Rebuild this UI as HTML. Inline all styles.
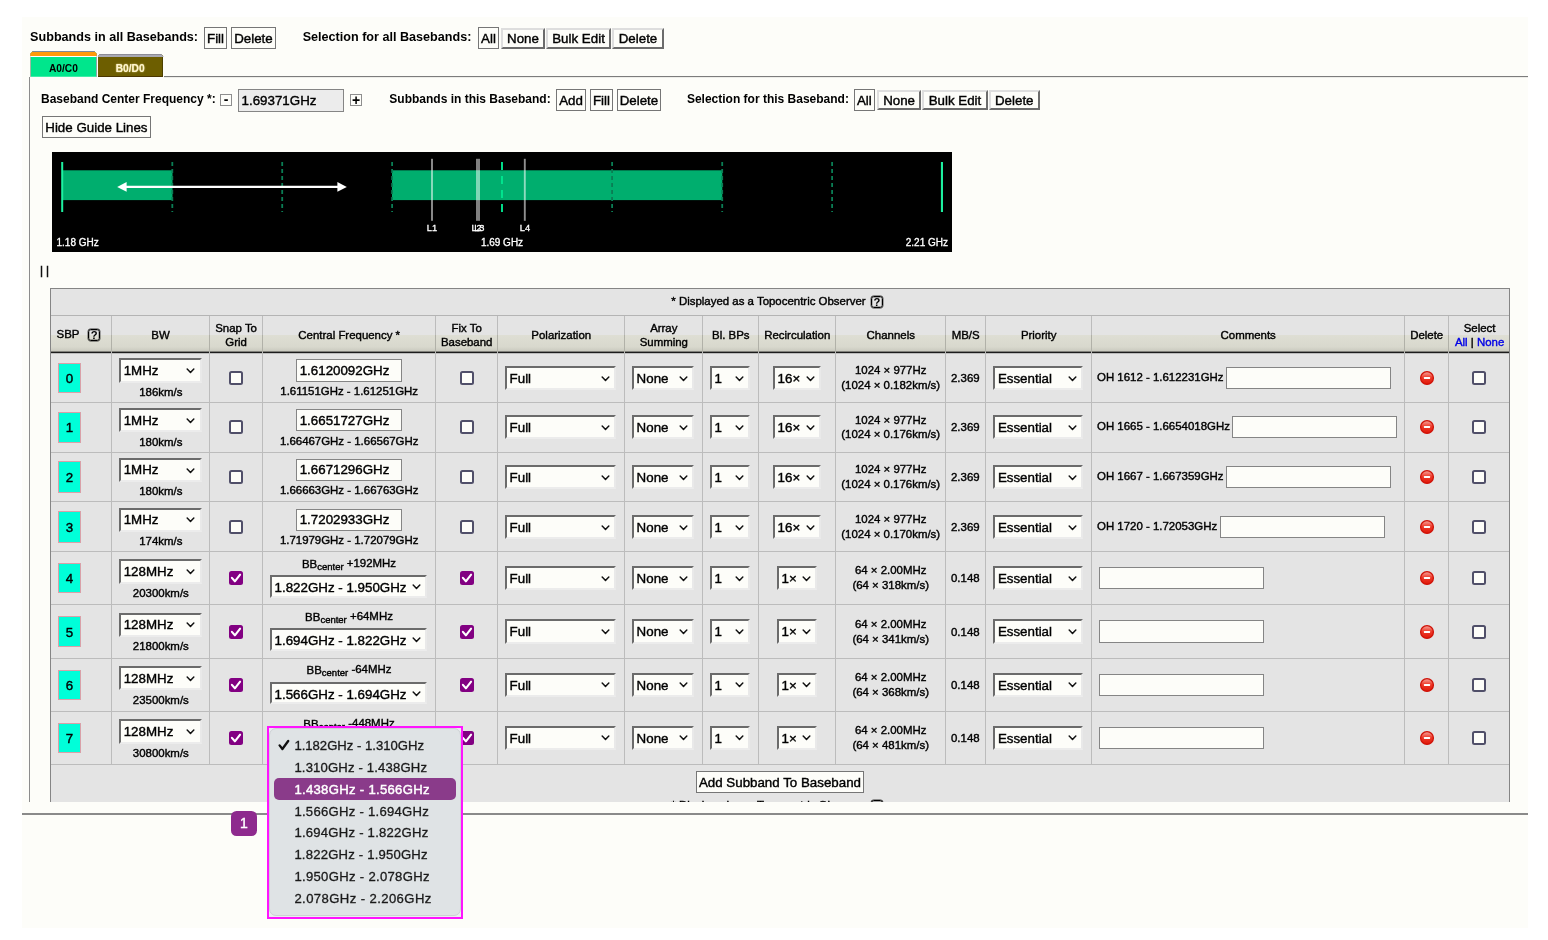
<!DOCTYPE html>
<html lang="en"><head><meta charset="utf-8"><title>Subband configuration</title><style>
html,body{margin:0;padding:0;background:#fff}
body{width:1548px;height:940px;position:relative;overflow:hidden;font-family:"Liberation Sans",Arial,Helvetica,sans-serif;color:#000}
body div,.abs{position:absolute;box-sizing:content-box}
.t{white-space:nowrap;-webkit-text-stroke:0.4px currentColor}
.t sub{font-size:9.5px;vertical-align:baseline;position:relative;top:2px;line-height:0}
.t .up{position:relative;top:-1px}
#all{left:0;top:0;width:1548px;height:940px;will-change:transform}
#clip{left:0;top:0;width:1548px;height:801.8px;overflow:hidden}
.sel{box-sizing:border-box;background:#fdfdf9;border:2px solid;border-color:#6b6b6b #e9e9e9 #ececec #6b6b6b;font-size:13.33px;white-space:nowrap;overflow:hidden}
.sel .chev{position:absolute;right:4.3px;top:50%;margin-top:-2.4px}
.btn{box-sizing:border-box;background:#fdfdf9;font-size:13.33px;text-align:center;white-space:nowrap}
.btn.flat{border:1px solid #767676}
.btn.outset{border:2px solid;border-color:#dedede #6c6c6c #6c6c6c #dedede}
.cb{width:14px;height:14px;box-sizing:border-box;border:2px solid #504f69;border-radius:2.5px;background:#fdfdf9}
.cb.on{border:0;background:#820082}
.cb.on svg{position:absolute;left:0;top:0}
.hlp{width:12px;height:12px;box-sizing:border-box;border:1px solid #000;border-radius:2.6px;box-shadow:0 0 0 0.4px rgba(0,0,0,.75),inset 0 0 0 0.4px rgba(0,0,0,.6)}
.mini{width:11.6px;height:11.6px;box-sizing:border-box;border:1px solid #8e8e8e;background:#fdfdf9}
</style></head><body>
<div id="all">
<div style="left:22.00px;top:17.00px;width:1506.00px;height:910.60px;background:#fdfdf9"></div>
<div class="t" style="left:30.10px;top:30px;font-size:12.6px;line-height:14px;font-weight:bold;-webkit-text-stroke:0;">Subbands in all Basebands:</div>
<div class="btn flat" style="left:204.10px;top:27.00px;width:22.80px;height:21.70px"></div>
<div class="t" style="left:-84.50px;width:600px;text-align:center;top:31px;font-size:13.33px;line-height:15px;">Fill</div>
<div class="btn flat" style="left:231.00px;top:27.00px;width:44.90px;height:21.70px"></div>
<div class="t" style="left:-46.55px;width:600px;text-align:center;top:31px;font-size:13.33px;line-height:15px;">Delete</div>
<div class="t" style="left:302.70px;top:30px;font-size:12.6px;line-height:14px;font-weight:bold;-webkit-text-stroke:0;">Selection for all Basebands:</div>
<div class="btn flat" style="left:478.00px;top:27.00px;width:20.90px;height:21.70px"></div>
<div class="t" style="left:188.45px;width:600px;text-align:center;top:31px;font-size:13.33px;line-height:15px;">All</div>
<div class="btn outset" style="left:501.40px;top:27.50px;width:43.20px;height:21.00px"></div>
<div class="t" style="left:223.00px;width:600px;text-align:center;top:31px;font-size:13.33px;line-height:15px;">None</div>
<div class="btn outset" style="left:545.60px;top:27.50px;width:65.90px;height:21.00px"></div>
<div class="t" style="left:278.55px;width:600px;text-align:center;top:31px;font-size:13.33px;line-height:15px;">Bulk Edit</div>
<div class="btn outset" style="left:612.20px;top:27.50px;width:51.60px;height:21.00px"></div>
<div class="t" style="left:338.00px;width:600px;text-align:center;top:31px;font-size:13.33px;line-height:15px;">Delete</div>
<div class="abs" style="left:30.3px;top:51px;width:66.4px;height:25.7px;background:#00e68c;clip-path:polygon(2.6px 0,63.8px 0,66.4px 2.6px,66.4px 100%,0 100%,0 2.6px);border-right:1px solid #a58aa5;border-left:1px solid #c9a0a0;box-sizing:border-box"><div style="position:absolute;left:-1px;right:-1px;top:0;height:5px;background:#ff9a0a;border-top:1px solid #7d8a99;box-sizing:border-box"></div><div style="position:absolute;left:-1px;right:-1px;top:5px;height:1.2px;background:#fff"></div></div>
<div class="t" style="left:-236.60px;width:600px;text-align:center;top:63px;font-size:10.2px;line-height:11px;font-weight:bold;-webkit-text-stroke:0;">A0/C0</div>
<div class="abs" style="left:97.7px;top:54px;width:65.6px;height:23px;background:#6d5e00;clip-path:polygon(2.2px 0,63.4px 0,65.6px 2.2px,65.6px 100%,0 100%,0 2.2px);border-right:1.5px solid #4d4100;border-bottom:1.5px solid #4a3600;box-sizing:border-box"><div style="position:absolute;left:0;right:-2px;top:0;height:2.8px;background:#a9a9b3;border-top:1px solid #8c8c96;box-sizing:border-box"></div></div>
<div class="t" style="left:-169.80px;width:600px;text-align:center;top:63px;font-size:10.2px;line-height:11px;font-weight:bold;-webkit-text-stroke:0;color:#fff6cf;text-shadow:0 0 1.5px #fff2b0;">B0/D0</div>
<div style="left:163.80px;top:76.00px;width:1364.20px;height:1.00px;background:#7c7c7c"></div>
<div style="left:163.80px;top:77.00px;width:1364.20px;height:1.00px;background:rgba(124,124,124,.12)"></div>
<div style="left:29.20px;top:76.80px;width:1.10px;height:725.00px;background:#8c8c8c"></div>
<div class="t" style="left:41.00px;top:92px;font-size:12px;line-height:14px;font-weight:bold;-webkit-text-stroke:0;">Baseband Center Frequency *:</div>
<div class="mini" style="left:220.2px;top:94.1px"></div>
<div class="t" style="left:-74.00px;width:600px;text-align:center;top:91px;font-size:14px;line-height:16px;font-weight:bold;-webkit-text-stroke:0;">-</div>
<div style="left:238.10px;top:89.00px;width:105.80px;height:22.70px;background:#ececec;border:1px solid #858585;box-sizing:border-box"></div>
<div class="t" style="left:241.60px;top:93px;font-size:13.33px;line-height:15px;">1.69371GHz</div>
<div class="mini" style="left:350.2px;top:94.1px"></div>
<div class="t" style="left:56.00px;width:600px;text-align:center;top:92px;font-size:14px;line-height:16px;font-weight:bold;-webkit-text-stroke:0;">+</div>
<div class="t" style="left:389.30px;top:92px;font-size:12px;line-height:14px;font-weight:bold;-webkit-text-stroke:0;">Subbands in this Baseband:</div>
<div class="btn flat" style="left:556.00px;top:89.30px;width:30.00px;height:22.20px"></div>
<div class="t" style="left:271.00px;width:600px;text-align:center;top:93px;font-size:13.33px;line-height:15px;">Add</div>
<div class="btn flat" style="left:590.00px;top:89.30px;width:22.80px;height:22.20px"></div>
<div class="t" style="left:301.40px;width:600px;text-align:center;top:93px;font-size:13.33px;line-height:15px;">Fill</div>
<div class="btn flat" style="left:617.00px;top:89.30px;width:43.90px;height:22.20px"></div>
<div class="t" style="left:338.95px;width:600px;text-align:center;top:93px;font-size:13.33px;line-height:15px;">Delete</div>
<div class="t" style="left:686.90px;top:92px;font-size:12px;line-height:14px;font-weight:bold;-webkit-text-stroke:0;">Selection for this Baseband:</div>
<div class="btn flat" style="left:854.00px;top:89.30px;width:20.70px;height:22.20px"></div>
<div class="t" style="left:564.35px;width:600px;text-align:center;top:93px;font-size:13.33px;line-height:15px;">All</div>
<div class="btn outset" style="left:877.20px;top:89.60px;width:43.80px;height:20.70px"></div>
<div class="t" style="left:599.10px;width:600px;text-align:center;top:93px;font-size:13.33px;line-height:15px;">None</div>
<div class="btn outset" style="left:922.20px;top:89.60px;width:65.50px;height:20.70px"></div>
<div class="t" style="left:654.95px;width:600px;text-align:center;top:93px;font-size:13.33px;line-height:15px;">Bulk Edit</div>
<div class="btn outset" style="left:988.60px;top:89.60px;width:51.30px;height:20.70px"></div>
<div class="t" style="left:714.25px;width:600px;text-align:center;top:93px;font-size:13.33px;line-height:15px;">Delete</div>
<div class="btn flat" style="left:42.00px;top:116.10px;width:108.80px;height:21.60px"></div>
<div class="t" style="left:-203.60px;width:600px;text-align:center;top:120px;font-size:13.33px;line-height:15px;">Hide Guide Lines</div>
<svg class="abs" style="left:52px;top:152px" width="900" height="100" viewBox="0 0 900 100"><rect width="900" height="100" fill="#000"/><rect x="10.6" y="18.3" width="109.9" height="29.8" fill="#00ae6e"/><rect x="340" y="18.3" width="330.3" height="29.8" fill="#00ae6e"/><line x1="120.3" y1="10" x2="120.3" y2="60" stroke="#0a7d54" stroke-width="1.8" stroke-dasharray="4 3"/><line x1="230.2" y1="10" x2="230.2" y2="60" stroke="#0a7d54" stroke-width="1.8" stroke-dasharray="4 3"/><line x1="340.1" y1="10" x2="340.1" y2="60" stroke="#0a7d54" stroke-width="1.8" stroke-dasharray="4 3"/><line x1="560.1" y1="10" x2="560.1" y2="60" stroke="#0a7d54" stroke-width="1.8" stroke-dasharray="4 3"/><line x1="670.2" y1="10" x2="670.2" y2="60" stroke="#0a7d54" stroke-width="1.8" stroke-dasharray="4 3"/><line x1="780.1" y1="10" x2="780.1" y2="60" stroke="#0a7d54" stroke-width="1.8" stroke-dasharray="4 3"/><line x1="450" y1="10" x2="450" y2="60" stroke="#00e58f" stroke-width="1.9" stroke-dasharray="8 6"/><rect x="9.2" y="10" width="2" height="50" fill="#1df0a0"/><rect x="888.9" y="10" width="2.1" height="50" fill="#1df0a0"/><line x1="72" y1="34.9" x2="288" y2="34.9" stroke="#fff" stroke-width="2.2"/><polygon points="65.2,34.9 74.6,30 74.6,39.8" fill="#fff"/><polygon points="294.8,34.9 285.4,30 285.4,39.8" fill="#fff"/><rect x="379.05" y="6.8" width="1.9" height="62" fill="#fff" fill-opacity="0.56"/><rect x="424.0" y="6.8" width="4.0" height="62" fill="#fff" fill-opacity="0.5"/><rect x="471.85" y="6.8" width="1.9" height="62" fill="#fff" fill-opacity="0.56"/><text x="380" y="79" font-size="9.3" text-anchor="middle" font-family="Liberation Sans, sans-serif" fill="#fff" stroke="#fff" stroke-width="0.3">L1</text><text x="424.6" y="79" font-size="9.3" text-anchor="middle" font-family="Liberation Sans, sans-serif" fill="#fff" stroke="#fff" stroke-width="0.3">L2</text><text x="427.3" y="79" font-size="9.3" text-anchor="middle" font-family="Liberation Sans, sans-serif" fill="#fff" stroke="#fff" stroke-width="0.3">L3</text><text x="473" y="79" font-size="9.3" text-anchor="middle" font-family="Liberation Sans, sans-serif" fill="#fff" stroke="#fff" stroke-width="0.3">L4</text><text x="4.5" y="94" font-size="10" font-family="Liberation Sans, sans-serif" fill="#fff" stroke="#fff" stroke-width="0.3">1.18 GHz</text><text x="450" y="94" font-size="10" text-anchor="middle" font-family="Liberation Sans, sans-serif" fill="#fff" stroke="#fff" stroke-width="0.3">1.69 GHz</text><text x="896" y="94" font-size="10" text-anchor="end" font-family="Liberation Sans, sans-serif" fill="#fff" stroke="#fff" stroke-width="0.3">2.21 GHz</text></svg>
<div style="left:41.00px;top:266.20px;width:1.00px;height:11.00px;background:#111;box-shadow:0 0 0 0.25px #111"></div>
<div style="left:47.00px;top:266.20px;width:1.00px;height:11.00px;background:#111;box-shadow:0 0 0 0.25px #111"></div>
<div id="clip">
<div style="left:50.20px;top:288.10px;width:1459.80px;height:551.90px;background:#e4e4e4;border:1px solid #858585;box-sizing:border-box"></div>
<div class="t" style="left:671.30px;top:295px;font-size:11.44px;line-height:12px;">* Displayed as a Topocentric Observer</div>
<div class="hlp" style="left:870.90px;top:295.80px"></div>
<div class="t" style="left:576.95px;width:600px;text-align:center;top:296px;font-size:11.2px;line-height:12px;font-weight:bold;-webkit-text-stroke:0;">?</div>
<div style="left:51.20px;top:314.70px;width:1457.80px;height:1.00px;background:#b4b4b4"></div>
<div style="left:51.20px;top:335.10px;width:1457.80px;height:16.90px;background:linear-gradient(#deded4,#d8d8cd 70%,#c6c6bc)"></div>
<div style="left:51.20px;top:351.00px;width:1457.80px;height:1.00px;background:rgba(28,28,28,.42)"></div>
<div style="left:51.20px;top:352.00px;width:1457.80px;height:1.00px;background:#1c1c1c"></div>
<div style="left:51.20px;top:353.00px;width:1457.80px;height:1.00px;background:rgba(28,28,28,.2)"></div>
<div class="t" style="left:56.50px;top:328px;font-size:11.44px;line-height:12px;">SBP</div>
<div class="hlp" style="left:88.10px;top:329.10px"></div>
<div class="t" style="left:-205.85px;width:600px;text-align:center;top:329px;font-size:11.2px;line-height:12px;font-weight:bold;-webkit-text-stroke:0;">?</div>
<div class="t" style="left:-139.50px;width:600px;text-align:center;top:329px;font-size:11.44px;line-height:12px;">BW</div>
<div class="t" style="left:-63.90px;width:600px;text-align:center;top:322px;font-size:11.44px;line-height:12px;">Snap To</div>
<div class="t" style="left:-63.90px;width:600px;text-align:center;top:336px;font-size:11.44px;line-height:12px;">Grid</div>
<div class="t" style="left:49.20px;width:600px;text-align:center;top:329px;font-size:11.44px;line-height:12px;">Central Frequency *</div>
<div class="t" style="left:166.70px;width:600px;text-align:center;top:322px;font-size:11.44px;line-height:12px;">Fix To</div>
<div class="t" style="left:166.70px;width:600px;text-align:center;top:336px;font-size:11.44px;line-height:12px;">Baseband</div>
<div class="t" style="left:261.25px;width:600px;text-align:center;top:329px;font-size:11.44px;line-height:12px;">Polarization</div>
<div class="t" style="left:363.80px;width:600px;text-align:center;top:322px;font-size:11.44px;line-height:12px;">Array</div>
<div class="t" style="left:363.80px;width:600px;text-align:center;top:336px;font-size:11.44px;line-height:12px;">Summing</div>
<div class="t" style="left:430.80px;width:600px;text-align:center;top:329px;font-size:11.44px;line-height:12px;">Bl. BPs</div>
<div class="t" style="left:497.30px;width:600px;text-align:center;top:329px;font-size:11.44px;line-height:12px;">Recirculation</div>
<div class="t" style="left:590.75px;width:600px;text-align:center;top:329px;font-size:11.44px;line-height:12px;">Channels</div>
<div class="t" style="left:665.70px;width:600px;text-align:center;top:329px;font-size:11.44px;line-height:12px;">MB/S</div>
<div class="t" style="left:738.70px;width:600px;text-align:center;top:329px;font-size:11.44px;line-height:12px;">Priority</div>
<div class="t" style="left:948.20px;width:600px;text-align:center;top:329px;font-size:11.44px;line-height:12px;">Comments</div>
<div class="t" style="left:1126.70px;width:600px;text-align:center;top:329px;font-size:11.44px;line-height:12px;">Delete</div>
<div class="t" style="left:1179.60px;width:600px;text-align:center;top:322px;font-size:11.44px;line-height:12px;">Select</div>
<div class="t" style="left:1179.60px;width:600px;text-align:center;top:336px;font-size:11.44px;line-height:12px;"><span style="color:#0000e6">All</span> | <span style="color:#0000e6">None</span></div>
<div style="left:111.00px;top:316.00px;width:1.00px;height:448.60px;background:#bcbcbc"></div>
<div style="left:111.00px;top:335.10px;width:1.00px;height:16.60px;background:#b1b1a8"></div>
<div style="left:209.00px;top:316.00px;width:1.00px;height:448.60px;background:#bcbcbc"></div>
<div style="left:209.00px;top:335.10px;width:1.00px;height:16.60px;background:#b1b1a8"></div>
<div style="left:262.20px;top:316.00px;width:1.00px;height:448.60px;background:#bcbcbc"></div>
<div style="left:262.20px;top:335.10px;width:1.00px;height:16.60px;background:#b1b1a8"></div>
<div style="left:435.20px;top:316.00px;width:1.00px;height:448.60px;background:#bcbcbc"></div>
<div style="left:435.20px;top:335.10px;width:1.00px;height:16.60px;background:#b1b1a8"></div>
<div style="left:497.20px;top:316.00px;width:1.00px;height:448.60px;background:#bcbcbc"></div>
<div style="left:497.20px;top:335.10px;width:1.00px;height:16.60px;background:#b1b1a8"></div>
<div style="left:624.30px;top:316.00px;width:1.00px;height:448.60px;background:#bcbcbc"></div>
<div style="left:624.30px;top:335.10px;width:1.00px;height:16.60px;background:#b1b1a8"></div>
<div style="left:702.30px;top:316.00px;width:1.00px;height:448.60px;background:#bcbcbc"></div>
<div style="left:702.30px;top:335.10px;width:1.00px;height:16.60px;background:#b1b1a8"></div>
<div style="left:758.30px;top:316.00px;width:1.00px;height:448.60px;background:#bcbcbc"></div>
<div style="left:758.30px;top:335.10px;width:1.00px;height:16.60px;background:#b1b1a8"></div>
<div style="left:835.30px;top:316.00px;width:1.00px;height:448.60px;background:#bcbcbc"></div>
<div style="left:835.30px;top:335.10px;width:1.00px;height:16.60px;background:#b1b1a8"></div>
<div style="left:945.20px;top:316.00px;width:1.00px;height:448.60px;background:#bcbcbc"></div>
<div style="left:945.20px;top:335.10px;width:1.00px;height:16.60px;background:#b1b1a8"></div>
<div style="left:985.20px;top:316.00px;width:1.00px;height:448.60px;background:#bcbcbc"></div>
<div style="left:985.20px;top:335.10px;width:1.00px;height:16.60px;background:#b1b1a8"></div>
<div style="left:1091.20px;top:316.00px;width:1.00px;height:448.60px;background:#bcbcbc"></div>
<div style="left:1091.20px;top:335.10px;width:1.00px;height:16.60px;background:#b1b1a8"></div>
<div style="left:1404.20px;top:316.00px;width:1.00px;height:448.60px;background:#bcbcbc"></div>
<div style="left:1404.20px;top:335.10px;width:1.00px;height:16.60px;background:#b1b1a8"></div>
<div style="left:1448.20px;top:316.00px;width:1.00px;height:448.60px;background:#bcbcbc"></div>
<div style="left:1448.20px;top:335.10px;width:1.00px;height:16.60px;background:#b1b1a8"></div>
<div style="left:51.20px;top:401.80px;width:1457.80px;height:1.00px;background:#bcbcbc"></div>
<div style="left:51.20px;top:451.60px;width:1457.80px;height:1.00px;background:#bcbcbc"></div>
<div style="left:51.20px;top:501.40px;width:1457.80px;height:1.00px;background:#bcbcbc"></div>
<div style="left:51.20px;top:551.00px;width:1457.80px;height:1.00px;background:#bcbcbc"></div>
<div style="left:51.20px;top:604.10px;width:1457.80px;height:1.00px;background:#bcbcbc"></div>
<div style="left:51.20px;top:657.50px;width:1457.80px;height:1.00px;background:#bcbcbc"></div>
<div style="left:51.20px;top:710.80px;width:1457.80px;height:1.00px;background:#bcbcbc"></div>
<div style="left:51.20px;top:764.00px;width:1457.80px;height:1.00px;background:#bcbcbc"></div>
<div style="left:58.10px;top:362.60px;width:22.70px;height:30.60px;background:#00ffd9;border:1px solid #d9a0a8;box-sizing:border-box"></div>
<div class="t" style="left:-230.50px;width:600px;text-align:center;top:371px;font-size:13.33px;line-height:15px;-webkit-text-stroke-width:0.4px;">0</div>
<div class="sel" style="left:119.00px;top:358.20px;width:82.60px;height:24.60px"><svg class="chev" viewBox="0 0 9 6" width="9" height="6"><path d="M1.2 1 L4.5 4.4 L7.8 1" fill="none" stroke="#111" stroke-width="1.5" stroke-linecap="round" stroke-linejoin="round"/></svg></div>
<div class="t" style="left:123.70px;top:363px;font-size:13.33px;line-height:15px;">1MHz</div>
<div class="t" style="left:-139.20px;width:600px;text-align:center;top:386px;font-size:11.44px;line-height:12px;">186km/s</div>
<div class="cb" style="left:229.00px;top:370.90px"></div>
<div style="left:295.90px;top:359.20px;width:105.90px;height:22.50px;background:#fdfdf9;border:1px solid #858585;box-sizing:border-box"></div>
<div class="t" style="left:299.70px;top:363px;font-size:13.33px;line-height:15px;">1.6120092GHz</div>
<div class="t" style="left:49.20px;width:600px;text-align:center;top:385px;font-size:11.44px;line-height:12px;">1.61151GHz - 1.61251GHz</div>
<div class="cb" style="left:460.10px;top:370.90px"></div>
<div class="sel" style="left:504.90px;top:365.60px;width:111.40px;height:24.60px"><svg class="chev" viewBox="0 0 9 6" width="9" height="6"><path d="M1.2 1 L4.5 4.4 L7.8 1" fill="none" stroke="#111" stroke-width="1.5" stroke-linecap="round" stroke-linejoin="round"/></svg></div>
<div class="t" style="left:509.60px;top:371px;font-size:13.33px;line-height:15px;">Full</div>
<div class="sel" style="left:631.90px;top:365.60px;width:62.40px;height:24.60px"><svg class="chev" viewBox="0 0 9 6" width="9" height="6"><path d="M1.2 1 L4.5 4.4 L7.8 1" fill="none" stroke="#111" stroke-width="1.5" stroke-linecap="round" stroke-linejoin="round"/></svg></div>
<div class="t" style="left:636.60px;top:371px;font-size:13.33px;line-height:15px;">None</div>
<div class="sel" style="left:709.90px;top:365.60px;width:40.20px;height:24.60px"><svg class="chev" viewBox="0 0 9 6" width="9" height="6"><path d="M1.2 1 L4.5 4.4 L7.8 1" fill="none" stroke="#111" stroke-width="1.5" stroke-linecap="round" stroke-linejoin="round"/></svg></div>
<div class="t" style="left:714.60px;top:371px;font-size:13.33px;line-height:15px;">1</div>
<div class="sel" style="left:772.90px;top:365.60px;width:48.50px;height:24.60px"><svg class="chev" viewBox="0 0 9 6" width="9" height="6"><path d="M1.2 1 L4.5 4.4 L7.8 1" fill="none" stroke="#111" stroke-width="1.5" stroke-linecap="round" stroke-linejoin="round"/></svg></div>
<div class="t" style="left:777.60px;top:371px;font-size:13.33px;line-height:15px;">16×</div>
<div class="t" style="left:590.70px;width:600px;text-align:center;top:364px;font-size:11.44px;line-height:12px;">1024 × 977Hz</div>
<div class="t" style="left:590.70px;width:600px;text-align:center;top:379px;font-size:11.44px;line-height:12px;">(1024 × 0.182km/s)</div>
<div class="t" style="left:665.30px;width:600px;text-align:center;top:372px;font-size:11.44px;line-height:12px;">2.369</div>
<div class="sel" style="left:993.20px;top:365.60px;width:90.10px;height:24.60px"><svg class="chev" viewBox="0 0 9 6" width="9" height="6"><path d="M1.2 1 L4.5 4.4 L7.8 1" fill="none" stroke="#111" stroke-width="1.5" stroke-linecap="round" stroke-linejoin="round"/></svg></div>
<div class="t" style="left:997.90px;top:371px;font-size:13.33px;line-height:15px;">Essential</div>
<div class="t" style="left:1097.00px;top:371px;font-size:11.44px;line-height:12px;">OH 1612 - 1.612231GHz</div>
<div style="left:1225.90px;top:366.60px;width:165.20px;height:22.30px;background:#fdfdf9;border:1px solid #858585;box-sizing:border-box"></div>
<svg class="abs" style="left:1419.00px;top:369.90px" width="16" height="16" viewBox="0 0 16 16"><defs><linearGradient id="rg" x1="0" y1="0" x2="0" y2="1"><stop offset="0" stop-color="#f7a9a0"/><stop offset="0.45" stop-color="#ee3a2a"/><stop offset="1" stop-color="#e01808"/></linearGradient></defs><circle cx="8" cy="8" r="6.4" fill="url(#rg)" stroke="#cf1208" stroke-width="1.3"/><rect x="4.9" y="7" width="6.2" height="2" rx="0.4" fill="#fff"/></svg>
<div class="cb" style="left:1472.00px;top:370.90px"></div>
<div style="left:58.10px;top:411.60px;width:22.70px;height:31.20px;background:#00ffd9;border:1px solid #d9a0a8;box-sizing:border-box"></div>
<div class="t" style="left:-230.50px;width:600px;text-align:center;top:420px;font-size:13.33px;line-height:15px;-webkit-text-stroke-width:0.4px;">1</div>
<div class="sel" style="left:119.00px;top:407.90px;width:82.60px;height:24.60px"><svg class="chev" viewBox="0 0 9 6" width="9" height="6"><path d="M1.2 1 L4.5 4.4 L7.8 1" fill="none" stroke="#111" stroke-width="1.5" stroke-linecap="round" stroke-linejoin="round"/></svg></div>
<div class="t" style="left:123.70px;top:413px;font-size:13.33px;line-height:15px;">1MHz</div>
<div class="t" style="left:-139.20px;width:600px;text-align:center;top:436px;font-size:11.44px;line-height:12px;">180km/s</div>
<div class="cb" style="left:229.00px;top:420.20px"></div>
<div style="left:295.90px;top:409.40px;width:105.90px;height:21.30px;background:#fdfdf9;border:1px solid #858585;box-sizing:border-box"></div>
<div class="t" style="left:299.70px;top:413px;font-size:13.33px;line-height:15px;">1.6651727GHz</div>
<div class="t" style="left:49.20px;width:600px;text-align:center;top:435px;font-size:11.44px;line-height:12px;">1.66467GHz - 1.66567GHz</div>
<div class="cb" style="left:460.10px;top:420.20px"></div>
<div class="sel" style="left:504.90px;top:414.90px;width:111.40px;height:24.60px"><svg class="chev" viewBox="0 0 9 6" width="9" height="6"><path d="M1.2 1 L4.5 4.4 L7.8 1" fill="none" stroke="#111" stroke-width="1.5" stroke-linecap="round" stroke-linejoin="round"/></svg></div>
<div class="t" style="left:509.60px;top:420px;font-size:13.33px;line-height:15px;">Full</div>
<div class="sel" style="left:631.90px;top:414.90px;width:62.40px;height:24.60px"><svg class="chev" viewBox="0 0 9 6" width="9" height="6"><path d="M1.2 1 L4.5 4.4 L7.8 1" fill="none" stroke="#111" stroke-width="1.5" stroke-linecap="round" stroke-linejoin="round"/></svg></div>
<div class="t" style="left:636.60px;top:420px;font-size:13.33px;line-height:15px;">None</div>
<div class="sel" style="left:709.90px;top:414.90px;width:40.20px;height:24.60px"><svg class="chev" viewBox="0 0 9 6" width="9" height="6"><path d="M1.2 1 L4.5 4.4 L7.8 1" fill="none" stroke="#111" stroke-width="1.5" stroke-linecap="round" stroke-linejoin="round"/></svg></div>
<div class="t" style="left:714.60px;top:420px;font-size:13.33px;line-height:15px;">1</div>
<div class="sel" style="left:772.90px;top:414.90px;width:48.50px;height:24.60px"><svg class="chev" viewBox="0 0 9 6" width="9" height="6"><path d="M1.2 1 L4.5 4.4 L7.8 1" fill="none" stroke="#111" stroke-width="1.5" stroke-linecap="round" stroke-linejoin="round"/></svg></div>
<div class="t" style="left:777.60px;top:420px;font-size:13.33px;line-height:15px;">16×</div>
<div class="t" style="left:590.70px;width:600px;text-align:center;top:414px;font-size:11.44px;line-height:12px;">1024 × 977Hz</div>
<div class="t" style="left:590.70px;width:600px;text-align:center;top:428px;font-size:11.44px;line-height:12px;">(1024 × 0.176km/s)</div>
<div class="t" style="left:665.30px;width:600px;text-align:center;top:421px;font-size:11.44px;line-height:12px;">2.369</div>
<div class="sel" style="left:993.20px;top:414.90px;width:90.10px;height:24.60px"><svg class="chev" viewBox="0 0 9 6" width="9" height="6"><path d="M1.2 1 L4.5 4.4 L7.8 1" fill="none" stroke="#111" stroke-width="1.5" stroke-linecap="round" stroke-linejoin="round"/></svg></div>
<div class="t" style="left:997.90px;top:420px;font-size:13.33px;line-height:15px;">Essential</div>
<div class="t" style="left:1097.00px;top:420px;font-size:11.44px;line-height:12px;">OH 1665 - 1.6654018GHz</div>
<div style="left:1232.20px;top:415.90px;width:165.20px;height:22.30px;background:#fdfdf9;border:1px solid #858585;box-sizing:border-box"></div>
<svg class="abs" style="left:1419.00px;top:419.20px" width="16" height="16" viewBox="0 0 16 16"><defs><linearGradient id="rg" x1="0" y1="0" x2="0" y2="1"><stop offset="0" stop-color="#f7a9a0"/><stop offset="0.45" stop-color="#ee3a2a"/><stop offset="1" stop-color="#e01808"/></linearGradient></defs><circle cx="8" cy="8" r="6.4" fill="url(#rg)" stroke="#cf1208" stroke-width="1.3"/><rect x="4.9" y="7" width="6.2" height="2" rx="0.4" fill="#fff"/></svg>
<div class="cb" style="left:1472.00px;top:420.20px"></div>
<div style="left:58.10px;top:461.40px;width:22.70px;height:31.20px;background:#00ffd9;border:1px solid #d9a0a8;box-sizing:border-box"></div>
<div class="t" style="left:-230.50px;width:600px;text-align:center;top:470px;font-size:13.33px;line-height:15px;-webkit-text-stroke-width:0.4px;">2</div>
<div class="sel" style="left:119.00px;top:457.70px;width:82.60px;height:24.60px"><svg class="chev" viewBox="0 0 9 6" width="9" height="6"><path d="M1.2 1 L4.5 4.4 L7.8 1" fill="none" stroke="#111" stroke-width="1.5" stroke-linecap="round" stroke-linejoin="round"/></svg></div>
<div class="t" style="left:123.70px;top:462px;font-size:13.33px;line-height:15px;">1MHz</div>
<div class="t" style="left:-139.20px;width:600px;text-align:center;top:485px;font-size:11.44px;line-height:12px;">180km/s</div>
<div class="cb" style="left:229.00px;top:470.00px"></div>
<div style="left:295.90px;top:459.20px;width:105.90px;height:21.50px;background:#fdfdf9;border:1px solid #858585;box-sizing:border-box"></div>
<div class="t" style="left:299.70px;top:462px;font-size:13.33px;line-height:15px;">1.6671296GHz</div>
<div class="t" style="left:49.20px;width:600px;text-align:center;top:484px;font-size:11.44px;line-height:12px;">1.66663GHz - 1.66763GHz</div>
<div class="cb" style="left:460.10px;top:470.00px"></div>
<div class="sel" style="left:504.90px;top:464.70px;width:111.40px;height:24.60px"><svg class="chev" viewBox="0 0 9 6" width="9" height="6"><path d="M1.2 1 L4.5 4.4 L7.8 1" fill="none" stroke="#111" stroke-width="1.5" stroke-linecap="round" stroke-linejoin="round"/></svg></div>
<div class="t" style="left:509.60px;top:470px;font-size:13.33px;line-height:15px;">Full</div>
<div class="sel" style="left:631.90px;top:464.70px;width:62.40px;height:24.60px"><svg class="chev" viewBox="0 0 9 6" width="9" height="6"><path d="M1.2 1 L4.5 4.4 L7.8 1" fill="none" stroke="#111" stroke-width="1.5" stroke-linecap="round" stroke-linejoin="round"/></svg></div>
<div class="t" style="left:636.60px;top:470px;font-size:13.33px;line-height:15px;">None</div>
<div class="sel" style="left:709.90px;top:464.70px;width:40.20px;height:24.60px"><svg class="chev" viewBox="0 0 9 6" width="9" height="6"><path d="M1.2 1 L4.5 4.4 L7.8 1" fill="none" stroke="#111" stroke-width="1.5" stroke-linecap="round" stroke-linejoin="round"/></svg></div>
<div class="t" style="left:714.60px;top:470px;font-size:13.33px;line-height:15px;">1</div>
<div class="sel" style="left:772.90px;top:464.70px;width:48.50px;height:24.60px"><svg class="chev" viewBox="0 0 9 6" width="9" height="6"><path d="M1.2 1 L4.5 4.4 L7.8 1" fill="none" stroke="#111" stroke-width="1.5" stroke-linecap="round" stroke-linejoin="round"/></svg></div>
<div class="t" style="left:777.60px;top:470px;font-size:13.33px;line-height:15px;">16×</div>
<div class="t" style="left:590.70px;width:600px;text-align:center;top:463px;font-size:11.44px;line-height:12px;">1024 × 977Hz</div>
<div class="t" style="left:590.70px;width:600px;text-align:center;top:478px;font-size:11.44px;line-height:12px;">(1024 × 0.176km/s)</div>
<div class="t" style="left:665.30px;width:600px;text-align:center;top:471px;font-size:11.44px;line-height:12px;">2.369</div>
<div class="sel" style="left:993.20px;top:464.70px;width:90.10px;height:24.60px"><svg class="chev" viewBox="0 0 9 6" width="9" height="6"><path d="M1.2 1 L4.5 4.4 L7.8 1" fill="none" stroke="#111" stroke-width="1.5" stroke-linecap="round" stroke-linejoin="round"/></svg></div>
<div class="t" style="left:997.90px;top:470px;font-size:13.33px;line-height:15px;">Essential</div>
<div class="t" style="left:1097.00px;top:470px;font-size:11.44px;line-height:12px;">OH 1667 - 1.667359GHz</div>
<div style="left:1225.90px;top:465.70px;width:165.20px;height:22.30px;background:#fdfdf9;border:1px solid #858585;box-sizing:border-box"></div>
<svg class="abs" style="left:1419.00px;top:469.00px" width="16" height="16" viewBox="0 0 16 16"><defs><linearGradient id="rg" x1="0" y1="0" x2="0" y2="1"><stop offset="0" stop-color="#f7a9a0"/><stop offset="0.45" stop-color="#ee3a2a"/><stop offset="1" stop-color="#e01808"/></linearGradient></defs><circle cx="8" cy="8" r="6.4" fill="url(#rg)" stroke="#cf1208" stroke-width="1.3"/><rect x="4.9" y="7" width="6.2" height="2" rx="0.4" fill="#fff"/></svg>
<div class="cb" style="left:1472.00px;top:470.00px"></div>
<div style="left:58.10px;top:511.40px;width:22.70px;height:31.20px;background:#00ffd9;border:1px solid #d9a0a8;box-sizing:border-box"></div>
<div class="t" style="left:-230.50px;width:600px;text-align:center;top:520px;font-size:13.33px;line-height:15px;-webkit-text-stroke-width:0.4px;">3</div>
<div class="sel" style="left:119.00px;top:507.50px;width:82.60px;height:24.60px"><svg class="chev" viewBox="0 0 9 6" width="9" height="6"><path d="M1.2 1 L4.5 4.4 L7.8 1" fill="none" stroke="#111" stroke-width="1.5" stroke-linecap="round" stroke-linejoin="round"/></svg></div>
<div class="t" style="left:123.70px;top:512px;font-size:13.33px;line-height:15px;">1MHz</div>
<div class="t" style="left:-139.20px;width:600px;text-align:center;top:535px;font-size:11.44px;line-height:12px;">174km/s</div>
<div class="cb" style="left:229.00px;top:520.00px"></div>
<div style="left:295.90px;top:509.30px;width:105.90px;height:21.40px;background:#fdfdf9;border:1px solid #858585;box-sizing:border-box"></div>
<div class="t" style="left:299.70px;top:512px;font-size:13.33px;line-height:15px;">1.7202933GHz</div>
<div class="t" style="left:49.20px;width:600px;text-align:center;top:534px;font-size:11.44px;line-height:12px;">1.71979GHz - 1.72079GHz</div>
<div class="cb" style="left:460.10px;top:520.00px"></div>
<div class="sel" style="left:504.90px;top:514.70px;width:111.40px;height:24.60px"><svg class="chev" viewBox="0 0 9 6" width="9" height="6"><path d="M1.2 1 L4.5 4.4 L7.8 1" fill="none" stroke="#111" stroke-width="1.5" stroke-linecap="round" stroke-linejoin="round"/></svg></div>
<div class="t" style="left:509.60px;top:520px;font-size:13.33px;line-height:15px;">Full</div>
<div class="sel" style="left:631.90px;top:514.70px;width:62.40px;height:24.60px"><svg class="chev" viewBox="0 0 9 6" width="9" height="6"><path d="M1.2 1 L4.5 4.4 L7.8 1" fill="none" stroke="#111" stroke-width="1.5" stroke-linecap="round" stroke-linejoin="round"/></svg></div>
<div class="t" style="left:636.60px;top:520px;font-size:13.33px;line-height:15px;">None</div>
<div class="sel" style="left:709.90px;top:514.70px;width:40.20px;height:24.60px"><svg class="chev" viewBox="0 0 9 6" width="9" height="6"><path d="M1.2 1 L4.5 4.4 L7.8 1" fill="none" stroke="#111" stroke-width="1.5" stroke-linecap="round" stroke-linejoin="round"/></svg></div>
<div class="t" style="left:714.60px;top:520px;font-size:13.33px;line-height:15px;">1</div>
<div class="sel" style="left:772.90px;top:514.70px;width:48.50px;height:24.60px"><svg class="chev" viewBox="0 0 9 6" width="9" height="6"><path d="M1.2 1 L4.5 4.4 L7.8 1" fill="none" stroke="#111" stroke-width="1.5" stroke-linecap="round" stroke-linejoin="round"/></svg></div>
<div class="t" style="left:777.60px;top:520px;font-size:13.33px;line-height:15px;">16×</div>
<div class="t" style="left:590.70px;width:600px;text-align:center;top:513px;font-size:11.44px;line-height:12px;">1024 × 977Hz</div>
<div class="t" style="left:590.70px;width:600px;text-align:center;top:528px;font-size:11.44px;line-height:12px;">(1024 × 0.170km/s)</div>
<div class="t" style="left:665.30px;width:600px;text-align:center;top:521px;font-size:11.44px;line-height:12px;">2.369</div>
<div class="sel" style="left:993.20px;top:514.70px;width:90.10px;height:24.60px"><svg class="chev" viewBox="0 0 9 6" width="9" height="6"><path d="M1.2 1 L4.5 4.4 L7.8 1" fill="none" stroke="#111" stroke-width="1.5" stroke-linecap="round" stroke-linejoin="round"/></svg></div>
<div class="t" style="left:997.90px;top:520px;font-size:13.33px;line-height:15px;">Essential</div>
<div class="t" style="left:1097.00px;top:520px;font-size:11.44px;line-height:12px;">OH 1720 - 1.72053GHz</div>
<div style="left:1219.50px;top:515.70px;width:165.20px;height:22.30px;background:#fdfdf9;border:1px solid #858585;box-sizing:border-box"></div>
<svg class="abs" style="left:1419.00px;top:519.00px" width="16" height="16" viewBox="0 0 16 16"><defs><linearGradient id="rg" x1="0" y1="0" x2="0" y2="1"><stop offset="0" stop-color="#f7a9a0"/><stop offset="0.45" stop-color="#ee3a2a"/><stop offset="1" stop-color="#e01808"/></linearGradient></defs><circle cx="8" cy="8" r="6.4" fill="url(#rg)" stroke="#cf1208" stroke-width="1.3"/><rect x="4.9" y="7" width="6.2" height="2" rx="0.4" fill="#fff"/></svg>
<div class="cb" style="left:1472.00px;top:520.00px"></div>
<div style="left:58.10px;top:562.70px;width:22.70px;height:30.60px;background:#00ffd9;border:1px solid #d9a0a8;box-sizing:border-box"></div>
<div class="t" style="left:-230.50px;width:600px;text-align:center;top:571px;font-size:13.33px;line-height:15px;-webkit-text-stroke-width:0.4px;">4</div>
<div class="sel" style="left:119.00px;top:559.40px;width:82.60px;height:24.60px"><svg class="chev" viewBox="0 0 9 6" width="9" height="6"><path d="M1.2 1 L4.5 4.4 L7.8 1" fill="none" stroke="#111" stroke-width="1.5" stroke-linecap="round" stroke-linejoin="round"/></svg></div>
<div class="t" style="left:123.70px;top:564px;font-size:13.33px;line-height:15px;">128MHz</div>
<div class="t" style="left:-139.20px;width:600px;text-align:center;top:587px;font-size:11.44px;line-height:12px;">20300km/s</div>
<div class="cb on" style="left:229.00px;top:571.00px"><svg viewBox="0 0 14 14" width="14" height="14"><path d="M2.9 6.9 L5.9 10.3 L11.1 3.7" fill="none" stroke="#fff" stroke-width="2.1" stroke-linecap="round" stroke-linejoin="round"/></svg></div>
<div class="t" style="left:49.00px;width:600px;text-align:center;top:558px;font-size:11.44px;line-height:12px;">BB<sub>center</sub> <span class="up">+192MHz</span></div>
<div class="sel" style="left:270.00px;top:575.10px;width:157.10px;height:22.90px"><svg class="chev" viewBox="0 0 9 6" width="9" height="6"><path d="M1.2 1 L4.5 4.4 L7.8 1" fill="none" stroke="#111" stroke-width="1.5" stroke-linecap="round" stroke-linejoin="round"/></svg></div>
<div class="t" style="left:274.60px;top:580px;font-size:13.33px;line-height:15px;">1.822GHz - 1.950GHz</div>
<div class="cb on" style="left:460.10px;top:571.00px"><svg viewBox="0 0 14 14" width="14" height="14"><path d="M2.9 6.9 L5.9 10.3 L11.1 3.7" fill="none" stroke="#fff" stroke-width="2.1" stroke-linecap="round" stroke-linejoin="round"/></svg></div>
<div class="sel" style="left:504.90px;top:565.70px;width:111.40px;height:24.60px"><svg class="chev" viewBox="0 0 9 6" width="9" height="6"><path d="M1.2 1 L4.5 4.4 L7.8 1" fill="none" stroke="#111" stroke-width="1.5" stroke-linecap="round" stroke-linejoin="round"/></svg></div>
<div class="t" style="left:509.60px;top:571px;font-size:13.33px;line-height:15px;">Full</div>
<div class="sel" style="left:631.90px;top:565.70px;width:62.40px;height:24.60px"><svg class="chev" viewBox="0 0 9 6" width="9" height="6"><path d="M1.2 1 L4.5 4.4 L7.8 1" fill="none" stroke="#111" stroke-width="1.5" stroke-linecap="round" stroke-linejoin="round"/></svg></div>
<div class="t" style="left:636.60px;top:571px;font-size:13.33px;line-height:15px;">None</div>
<div class="sel" style="left:709.90px;top:565.70px;width:40.20px;height:24.60px"><svg class="chev" viewBox="0 0 9 6" width="9" height="6"><path d="M1.2 1 L4.5 4.4 L7.8 1" fill="none" stroke="#111" stroke-width="1.5" stroke-linecap="round" stroke-linejoin="round"/></svg></div>
<div class="t" style="left:714.60px;top:571px;font-size:13.33px;line-height:15px;">1</div>
<div class="sel" style="left:776.80px;top:565.70px;width:40.40px;height:24.60px"><svg class="chev" viewBox="0 0 9 6" width="9" height="6"><path d="M1.2 1 L4.5 4.4 L7.8 1" fill="none" stroke="#111" stroke-width="1.5" stroke-linecap="round" stroke-linejoin="round"/></svg></div>
<div class="t" style="left:781.50px;top:571px;font-size:13.33px;line-height:15px;">1×</div>
<div class="t" style="left:590.70px;width:600px;text-align:center;top:564px;font-size:11.44px;line-height:12px;">64 × 2.00MHz</div>
<div class="t" style="left:590.70px;width:600px;text-align:center;top:579px;font-size:11.44px;line-height:12px;">(64 × 318km/s)</div>
<div class="t" style="left:665.30px;width:600px;text-align:center;top:572px;font-size:11.44px;line-height:12px;">0.148</div>
<div class="sel" style="left:993.20px;top:565.70px;width:90.10px;height:24.60px"><svg class="chev" viewBox="0 0 9 6" width="9" height="6"><path d="M1.2 1 L4.5 4.4 L7.8 1" fill="none" stroke="#111" stroke-width="1.5" stroke-linecap="round" stroke-linejoin="round"/></svg></div>
<div class="t" style="left:997.90px;top:571px;font-size:13.33px;line-height:15px;">Essential</div>
<div style="left:1098.80px;top:566.70px;width:165.20px;height:22.30px;background:#fdfdf9;border:1px solid #858585;box-sizing:border-box"></div>
<svg class="abs" style="left:1419.00px;top:570.00px" width="16" height="16" viewBox="0 0 16 16"><defs><linearGradient id="rg" x1="0" y1="0" x2="0" y2="1"><stop offset="0" stop-color="#f7a9a0"/><stop offset="0.45" stop-color="#ee3a2a"/><stop offset="1" stop-color="#e01808"/></linearGradient></defs><circle cx="8" cy="8" r="6.4" fill="url(#rg)" stroke="#cf1208" stroke-width="1.3"/><rect x="4.9" y="7" width="6.2" height="2" rx="0.4" fill="#fff"/></svg>
<div class="cb" style="left:1472.00px;top:571.00px"></div>
<div style="left:58.10px;top:616.30px;width:22.70px;height:30.60px;background:#00ffd9;border:1px solid #d9a0a8;box-sizing:border-box"></div>
<div class="t" style="left:-230.50px;width:600px;text-align:center;top:625px;font-size:13.33px;line-height:15px;-webkit-text-stroke-width:0.4px;">5</div>
<div class="sel" style="left:119.00px;top:612.50px;width:82.60px;height:24.60px"><svg class="chev" viewBox="0 0 9 6" width="9" height="6"><path d="M1.2 1 L4.5 4.4 L7.8 1" fill="none" stroke="#111" stroke-width="1.5" stroke-linecap="round" stroke-linejoin="round"/></svg></div>
<div class="t" style="left:123.70px;top:617px;font-size:13.33px;line-height:15px;">128MHz</div>
<div class="t" style="left:-139.20px;width:600px;text-align:center;top:640px;font-size:11.44px;line-height:12px;">21800km/s</div>
<div class="cb on" style="left:229.00px;top:624.60px"><svg viewBox="0 0 14 14" width="14" height="14"><path d="M2.9 6.9 L5.9 10.3 L11.1 3.7" fill="none" stroke="#fff" stroke-width="2.1" stroke-linecap="round" stroke-linejoin="round"/></svg></div>
<div class="t" style="left:49.00px;width:600px;text-align:center;top:611px;font-size:11.44px;line-height:12px;">BB<sub>center</sub> <span class="up">+64MHz</span></div>
<div class="sel" style="left:270.00px;top:628.20px;width:157.10px;height:22.90px"><svg class="chev" viewBox="0 0 9 6" width="9" height="6"><path d="M1.2 1 L4.5 4.4 L7.8 1" fill="none" stroke="#111" stroke-width="1.5" stroke-linecap="round" stroke-linejoin="round"/></svg></div>
<div class="t" style="left:274.60px;top:633px;font-size:13.33px;line-height:15px;">1.694GHz - 1.822GHz</div>
<div class="cb on" style="left:460.10px;top:624.60px"><svg viewBox="0 0 14 14" width="14" height="14"><path d="M2.9 6.9 L5.9 10.3 L11.1 3.7" fill="none" stroke="#fff" stroke-width="2.1" stroke-linecap="round" stroke-linejoin="round"/></svg></div>
<div class="sel" style="left:504.90px;top:619.30px;width:111.40px;height:24.60px"><svg class="chev" viewBox="0 0 9 6" width="9" height="6"><path d="M1.2 1 L4.5 4.4 L7.8 1" fill="none" stroke="#111" stroke-width="1.5" stroke-linecap="round" stroke-linejoin="round"/></svg></div>
<div class="t" style="left:509.60px;top:624px;font-size:13.33px;line-height:15px;">Full</div>
<div class="sel" style="left:631.90px;top:619.30px;width:62.40px;height:24.60px"><svg class="chev" viewBox="0 0 9 6" width="9" height="6"><path d="M1.2 1 L4.5 4.4 L7.8 1" fill="none" stroke="#111" stroke-width="1.5" stroke-linecap="round" stroke-linejoin="round"/></svg></div>
<div class="t" style="left:636.60px;top:624px;font-size:13.33px;line-height:15px;">None</div>
<div class="sel" style="left:709.90px;top:619.30px;width:40.20px;height:24.60px"><svg class="chev" viewBox="0 0 9 6" width="9" height="6"><path d="M1.2 1 L4.5 4.4 L7.8 1" fill="none" stroke="#111" stroke-width="1.5" stroke-linecap="round" stroke-linejoin="round"/></svg></div>
<div class="t" style="left:714.60px;top:624px;font-size:13.33px;line-height:15px;">1</div>
<div class="sel" style="left:776.80px;top:619.30px;width:40.40px;height:24.60px"><svg class="chev" viewBox="0 0 9 6" width="9" height="6"><path d="M1.2 1 L4.5 4.4 L7.8 1" fill="none" stroke="#111" stroke-width="1.5" stroke-linecap="round" stroke-linejoin="round"/></svg></div>
<div class="t" style="left:781.50px;top:624px;font-size:13.33px;line-height:15px;">1×</div>
<div class="t" style="left:590.70px;width:600px;text-align:center;top:618px;font-size:11.44px;line-height:12px;">64 × 2.00MHz</div>
<div class="t" style="left:590.70px;width:600px;text-align:center;top:633px;font-size:11.44px;line-height:12px;">(64 × 341km/s)</div>
<div class="t" style="left:665.30px;width:600px;text-align:center;top:626px;font-size:11.44px;line-height:12px;">0.148</div>
<div class="sel" style="left:993.20px;top:619.30px;width:90.10px;height:24.60px"><svg class="chev" viewBox="0 0 9 6" width="9" height="6"><path d="M1.2 1 L4.5 4.4 L7.8 1" fill="none" stroke="#111" stroke-width="1.5" stroke-linecap="round" stroke-linejoin="round"/></svg></div>
<div class="t" style="left:997.90px;top:624px;font-size:13.33px;line-height:15px;">Essential</div>
<div style="left:1098.80px;top:620.30px;width:165.20px;height:22.30px;background:#fdfdf9;border:1px solid #858585;box-sizing:border-box"></div>
<svg class="abs" style="left:1419.00px;top:623.60px" width="16" height="16" viewBox="0 0 16 16"><defs><linearGradient id="rg" x1="0" y1="0" x2="0" y2="1"><stop offset="0" stop-color="#f7a9a0"/><stop offset="0.45" stop-color="#ee3a2a"/><stop offset="1" stop-color="#e01808"/></linearGradient></defs><circle cx="8" cy="8" r="6.4" fill="url(#rg)" stroke="#cf1208" stroke-width="1.3"/><rect x="4.9" y="7" width="6.2" height="2" rx="0.4" fill="#fff"/></svg>
<div class="cb" style="left:1472.00px;top:624.60px"></div>
<div style="left:58.10px;top:669.50px;width:22.70px;height:30.60px;background:#00ffd9;border:1px solid #d9a0a8;box-sizing:border-box"></div>
<div class="t" style="left:-230.50px;width:600px;text-align:center;top:678px;font-size:13.33px;line-height:15px;-webkit-text-stroke-width:0.4px;">6</div>
<div class="sel" style="left:119.00px;top:665.90px;width:82.60px;height:24.60px"><svg class="chev" viewBox="0 0 9 6" width="9" height="6"><path d="M1.2 1 L4.5 4.4 L7.8 1" fill="none" stroke="#111" stroke-width="1.5" stroke-linecap="round" stroke-linejoin="round"/></svg></div>
<div class="t" style="left:123.70px;top:671px;font-size:13.33px;line-height:15px;">128MHz</div>
<div class="t" style="left:-139.20px;width:600px;text-align:center;top:694px;font-size:11.44px;line-height:12px;">23500km/s</div>
<div class="cb on" style="left:229.00px;top:677.80px"><svg viewBox="0 0 14 14" width="14" height="14"><path d="M2.9 6.9 L5.9 10.3 L11.1 3.7" fill="none" stroke="#fff" stroke-width="2.1" stroke-linecap="round" stroke-linejoin="round"/></svg></div>
<div class="t" style="left:49.00px;width:600px;text-align:center;top:664px;font-size:11.44px;line-height:12px;">BB<sub>center</sub> <span class="up">-64MHz</span></div>
<div class="sel" style="left:270.00px;top:681.60px;width:157.10px;height:22.90px"><svg class="chev" viewBox="0 0 9 6" width="9" height="6"><path d="M1.2 1 L4.5 4.4 L7.8 1" fill="none" stroke="#111" stroke-width="1.5" stroke-linecap="round" stroke-linejoin="round"/></svg></div>
<div class="t" style="left:274.60px;top:687px;font-size:13.33px;line-height:15px;">1.566GHz - 1.694GHz</div>
<div class="cb on" style="left:460.10px;top:677.80px"><svg viewBox="0 0 14 14" width="14" height="14"><path d="M2.9 6.9 L5.9 10.3 L11.1 3.7" fill="none" stroke="#fff" stroke-width="2.1" stroke-linecap="round" stroke-linejoin="round"/></svg></div>
<div class="sel" style="left:504.90px;top:672.50px;width:111.40px;height:24.60px"><svg class="chev" viewBox="0 0 9 6" width="9" height="6"><path d="M1.2 1 L4.5 4.4 L7.8 1" fill="none" stroke="#111" stroke-width="1.5" stroke-linecap="round" stroke-linejoin="round"/></svg></div>
<div class="t" style="left:509.60px;top:678px;font-size:13.33px;line-height:15px;">Full</div>
<div class="sel" style="left:631.90px;top:672.50px;width:62.40px;height:24.60px"><svg class="chev" viewBox="0 0 9 6" width="9" height="6"><path d="M1.2 1 L4.5 4.4 L7.8 1" fill="none" stroke="#111" stroke-width="1.5" stroke-linecap="round" stroke-linejoin="round"/></svg></div>
<div class="t" style="left:636.60px;top:678px;font-size:13.33px;line-height:15px;">None</div>
<div class="sel" style="left:709.90px;top:672.50px;width:40.20px;height:24.60px"><svg class="chev" viewBox="0 0 9 6" width="9" height="6"><path d="M1.2 1 L4.5 4.4 L7.8 1" fill="none" stroke="#111" stroke-width="1.5" stroke-linecap="round" stroke-linejoin="round"/></svg></div>
<div class="t" style="left:714.60px;top:678px;font-size:13.33px;line-height:15px;">1</div>
<div class="sel" style="left:776.80px;top:672.50px;width:40.40px;height:24.60px"><svg class="chev" viewBox="0 0 9 6" width="9" height="6"><path d="M1.2 1 L4.5 4.4 L7.8 1" fill="none" stroke="#111" stroke-width="1.5" stroke-linecap="round" stroke-linejoin="round"/></svg></div>
<div class="t" style="left:781.50px;top:678px;font-size:13.33px;line-height:15px;">1×</div>
<div class="t" style="left:590.70px;width:600px;text-align:center;top:671px;font-size:11.44px;line-height:12px;">64 × 2.00MHz</div>
<div class="t" style="left:590.70px;width:600px;text-align:center;top:686px;font-size:11.44px;line-height:12px;">(64 × 368km/s)</div>
<div class="t" style="left:665.30px;width:600px;text-align:center;top:679px;font-size:11.44px;line-height:12px;">0.148</div>
<div class="sel" style="left:993.20px;top:672.50px;width:90.10px;height:24.60px"><svg class="chev" viewBox="0 0 9 6" width="9" height="6"><path d="M1.2 1 L4.5 4.4 L7.8 1" fill="none" stroke="#111" stroke-width="1.5" stroke-linecap="round" stroke-linejoin="round"/></svg></div>
<div class="t" style="left:997.90px;top:678px;font-size:13.33px;line-height:15px;">Essential</div>
<div style="left:1098.80px;top:673.50px;width:165.20px;height:22.30px;background:#fdfdf9;border:1px solid #858585;box-sizing:border-box"></div>
<svg class="abs" style="left:1419.00px;top:676.80px" width="16" height="16" viewBox="0 0 16 16"><defs><linearGradient id="rg" x1="0" y1="0" x2="0" y2="1"><stop offset="0" stop-color="#f7a9a0"/><stop offset="0.45" stop-color="#ee3a2a"/><stop offset="1" stop-color="#e01808"/></linearGradient></defs><circle cx="8" cy="8" r="6.4" fill="url(#rg)" stroke="#cf1208" stroke-width="1.3"/><rect x="4.9" y="7" width="6.2" height="2" rx="0.4" fill="#fff"/></svg>
<div class="cb" style="left:1472.00px;top:677.80px"></div>
<div style="left:58.10px;top:722.50px;width:22.70px;height:30.60px;background:#00ffd9;border:1px solid #d9a0a8;box-sizing:border-box"></div>
<div class="t" style="left:-230.50px;width:600px;text-align:center;top:731px;font-size:13.33px;line-height:15px;-webkit-text-stroke-width:0.4px;">7</div>
<div class="sel" style="left:119.00px;top:719.20px;width:82.60px;height:24.60px"><svg class="chev" viewBox="0 0 9 6" width="9" height="6"><path d="M1.2 1 L4.5 4.4 L7.8 1" fill="none" stroke="#111" stroke-width="1.5" stroke-linecap="round" stroke-linejoin="round"/></svg></div>
<div class="t" style="left:123.70px;top:724px;font-size:13.33px;line-height:15px;">128MHz</div>
<div class="t" style="left:-139.20px;width:600px;text-align:center;top:747px;font-size:11.44px;line-height:12px;">30800km/s</div>
<div class="cb on" style="left:229.00px;top:730.80px"><svg viewBox="0 0 14 14" width="14" height="14"><path d="M2.9 6.9 L5.9 10.3 L11.1 3.7" fill="none" stroke="#fff" stroke-width="2.1" stroke-linecap="round" stroke-linejoin="round"/></svg></div>
<div class="t" style="left:49.00px;width:600px;text-align:center;top:718px;font-size:11.44px;line-height:12px;">BB<sub>center</sub> <span class="up">-448MHz</span></div>
<div class="cb on" style="left:460.10px;top:730.80px"><svg viewBox="0 0 14 14" width="14" height="14"><path d="M2.9 6.9 L5.9 10.3 L11.1 3.7" fill="none" stroke="#fff" stroke-width="2.1" stroke-linecap="round" stroke-linejoin="round"/></svg></div>
<div class="sel" style="left:504.90px;top:725.50px;width:111.40px;height:24.60px"><svg class="chev" viewBox="0 0 9 6" width="9" height="6"><path d="M1.2 1 L4.5 4.4 L7.8 1" fill="none" stroke="#111" stroke-width="1.5" stroke-linecap="round" stroke-linejoin="round"/></svg></div>
<div class="t" style="left:509.60px;top:731px;font-size:13.33px;line-height:15px;">Full</div>
<div class="sel" style="left:631.90px;top:725.50px;width:62.40px;height:24.60px"><svg class="chev" viewBox="0 0 9 6" width="9" height="6"><path d="M1.2 1 L4.5 4.4 L7.8 1" fill="none" stroke="#111" stroke-width="1.5" stroke-linecap="round" stroke-linejoin="round"/></svg></div>
<div class="t" style="left:636.60px;top:731px;font-size:13.33px;line-height:15px;">None</div>
<div class="sel" style="left:709.90px;top:725.50px;width:40.20px;height:24.60px"><svg class="chev" viewBox="0 0 9 6" width="9" height="6"><path d="M1.2 1 L4.5 4.4 L7.8 1" fill="none" stroke="#111" stroke-width="1.5" stroke-linecap="round" stroke-linejoin="round"/></svg></div>
<div class="t" style="left:714.60px;top:731px;font-size:13.33px;line-height:15px;">1</div>
<div class="sel" style="left:776.80px;top:725.50px;width:40.40px;height:24.60px"><svg class="chev" viewBox="0 0 9 6" width="9" height="6"><path d="M1.2 1 L4.5 4.4 L7.8 1" fill="none" stroke="#111" stroke-width="1.5" stroke-linecap="round" stroke-linejoin="round"/></svg></div>
<div class="t" style="left:781.50px;top:731px;font-size:13.33px;line-height:15px;">1×</div>
<div class="t" style="left:590.70px;width:600px;text-align:center;top:724px;font-size:11.44px;line-height:12px;">64 × 2.00MHz</div>
<div class="t" style="left:590.70px;width:600px;text-align:center;top:739px;font-size:11.44px;line-height:12px;">(64 × 481km/s)</div>
<div class="t" style="left:665.30px;width:600px;text-align:center;top:732px;font-size:11.44px;line-height:12px;">0.148</div>
<div class="sel" style="left:993.20px;top:725.50px;width:90.10px;height:24.60px"><svg class="chev" viewBox="0 0 9 6" width="9" height="6"><path d="M1.2 1 L4.5 4.4 L7.8 1" fill="none" stroke="#111" stroke-width="1.5" stroke-linecap="round" stroke-linejoin="round"/></svg></div>
<div class="t" style="left:997.90px;top:731px;font-size:13.33px;line-height:15px;">Essential</div>
<div style="left:1098.80px;top:726.50px;width:165.20px;height:22.30px;background:#fdfdf9;border:1px solid #858585;box-sizing:border-box"></div>
<svg class="abs" style="left:1419.00px;top:729.80px" width="16" height="16" viewBox="0 0 16 16"><defs><linearGradient id="rg" x1="0" y1="0" x2="0" y2="1"><stop offset="0" stop-color="#f7a9a0"/><stop offset="0.45" stop-color="#ee3a2a"/><stop offset="1" stop-color="#e01808"/></linearGradient></defs><circle cx="8" cy="8" r="6.4" fill="url(#rg)" stroke="#cf1208" stroke-width="1.3"/><rect x="4.9" y="7" width="6.2" height="2" rx="0.4" fill="#fff"/></svg>
<div class="cb" style="left:1472.00px;top:730.80px"></div>
<div class="btn flat" style="left:696.10px;top:771.40px;width:167.70px;height:21.40px"></div>
<div class="t" style="left:479.95px;width:600px;text-align:center;top:775px;font-size:13.33px;line-height:15px;">Add Subband To Baseband</div>
<div class="t" style="left:671.30px;top:799px;font-size:11.44px;line-height:12px;">* Displayed as a Topocentric Observer</div>
<div class="hlp" style="left:870.90px;top:800.20px"></div>
<div class="t" style="left:576.95px;width:600px;text-align:center;top:800px;font-size:11.2px;line-height:12px;font-weight:bold;-webkit-text-stroke:0;">?</div>
</div>
<div style="left:22.00px;top:812.90px;width:1506.00px;height:1.90px;background:#8a8a8a"></div>
<div style="left:231.00px;top:810.80px;width:25.80px;height:24.90px;background:#8e2a8e;border-radius:5.5px"></div>
<div class="t" style="left:-56.10px;width:600px;text-align:center;top:815px;font-size:14px;line-height:16px;color:#fff;">1</div>
<div style="left:266.90px;top:726.00px;width:196.20px;height:192.60px;background:#e9ecee;border:2.4px solid #ff14ff;box-sizing:border-box"></div>
<div style="left:269.00px;top:728.10px;width:192.00px;height:188.40px;background:#dfe3e5;border-radius:7px;border:1px solid #cdd1d4;box-sizing:border-box"></div>
<div style="left:274.00px;top:778.20px;width:182.00px;height:21.60px;background:#8a3b8a;border-radius:5px"></div>
<div class="t" style="left:294.40px;top:738px;font-size:13.1px;line-height:15px;color:#1a1a1a;letter-spacing:0px;-webkit-text-stroke-width:0.32px;">1.182GHz - 1.310GHz</div>
<div class="t" style="left:294.40px;top:760px;font-size:13.1px;line-height:15px;color:#1a1a1a;letter-spacing:0.17px;-webkit-text-stroke-width:0.32px;">1.310GHz - 1.438GHz</div>
<div class="t" style="left:294.40px;top:782px;font-size:13.1px;line-height:15px;color:#fff;letter-spacing:0.31px;-webkit-text-stroke-width:0.45px;">1.438GHz - 1.566GHz</div>
<div class="t" style="left:294.40px;top:804px;font-size:13.1px;line-height:15px;color:#1a1a1a;letter-spacing:0.27px;-webkit-text-stroke-width:0.32px;">1.566GHz - 1.694GHz</div>
<div class="t" style="left:294.40px;top:825px;font-size:13.1px;line-height:15px;color:#1a1a1a;letter-spacing:0.24px;-webkit-text-stroke-width:0.32px;">1.694GHz - 1.822GHz</div>
<div class="t" style="left:294.40px;top:847px;font-size:13.1px;line-height:15px;color:#1a1a1a;letter-spacing:0.2px;-webkit-text-stroke-width:0.32px;">1.822GHz - 1.950GHz</div>
<div class="t" style="left:294.40px;top:869px;font-size:13.1px;line-height:15px;color:#1a1a1a;letter-spacing:0.31px;-webkit-text-stroke-width:0.32px;">1.950GHz - 2.078GHz</div>
<div class="t" style="left:294.40px;top:891px;font-size:13.1px;line-height:15px;color:#1a1a1a;letter-spacing:0.41px;-webkit-text-stroke-width:0.32px;">2.078GHz - 2.206GHz</div>
<svg class="abs" style="left:278px;top:739px" width="12" height="12" viewBox="0 0 12 12"><path d="M1.6 6.4 L4.4 10 L10.2 2" fill="none" stroke="#111" stroke-width="2.3" stroke-linecap="round" stroke-linejoin="round"/></svg>
</div>
</body></html>
